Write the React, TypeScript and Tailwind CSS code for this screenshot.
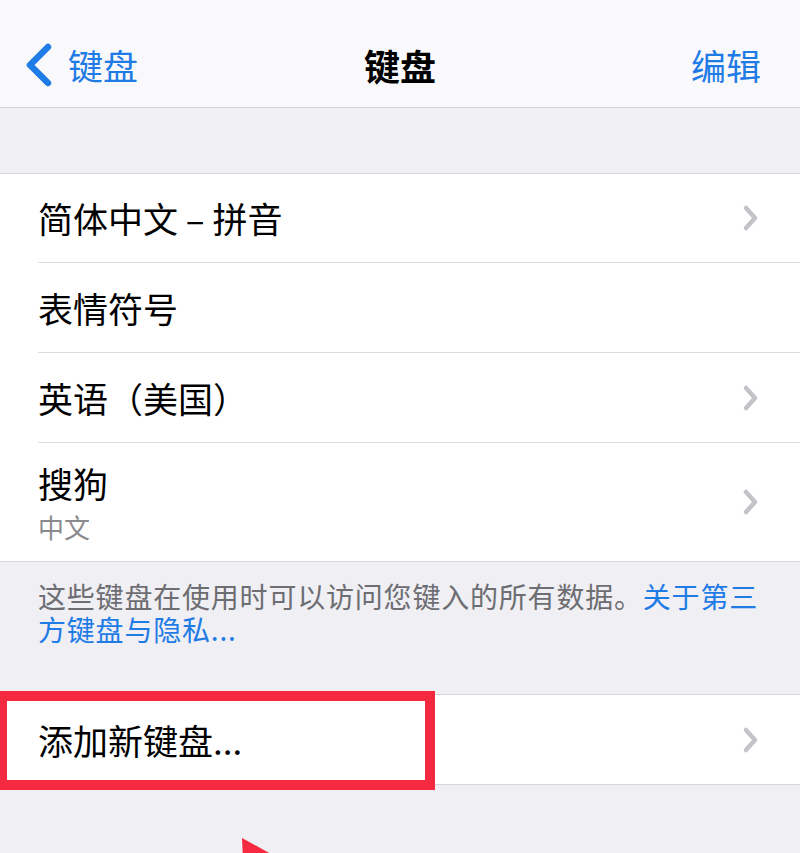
const font = { fontFamily: '"Noto Sans CJK SC", "Noto Sans", sans-serif' };

function Chevron() {
  return (
    <svg width="18" height="28" viewBox="0 0 18 28" className="shrink-0">
      <path d="M4 4 L13 14 L4 24" fill="none" stroke="#c4c4c8" strokeWidth="4.5" strokeLinecap="round" strokeLinejoin="round" />
    </svg>
  );
}

function Row({ title, sub, h, chevron = true, last = false }: { title: string; sub?: string; h: string; chevron?: boolean; last?: boolean }) {
  return (
    <div className="pl-[38px] bg-white">
      <div className={`${h} flex items-center justify-between pr-[40px] ${last ? '' : 'border-b border-[#dcdce0]'}`}>
        <div className="flex flex-col">
          <span className="text-[35px] leading-[40px] text-black">{title}</span>
          {sub && <span className="text-[26px] leading-[30px] text-[#8a8a8e] mt-[9px]">{sub}</span>}
        </div>
        {chevron && <Chevron />}
      </div>
    </div>
  );
}

export default function App() {
  return (
    <div style={font} className="relative w-[800px] h-[853px] bg-[#efeff4] overflow-hidden">
      {/* nav bar */}
      <div className="h-[108px] bg-[#f9f9fb] border-b border-[#d4d4d8] grid grid-cols-[1fr_auto_1fr] items-center px-[24px] pt-[22px]">
        <div className="flex items-center gap-[14px] text-[#1f7be6]">
          <svg width="30" height="44" viewBox="0 0 30 44">
            <path d="M24 4 L6 22 L24 40" fill="none" stroke="#1f7be6" strokeWidth="6.5" strokeLinecap="round" strokeLinejoin="round" />
          </svg>
          <span className="text-[35px] leading-none">键盘</span>
        </div>
        <span className="text-[36px] font-bold leading-none text-black">键盘</span>
        <span className="justify-self-end text-[35px] leading-none text-[#1f7be6] pr-[15px]">编辑</span>
      </div>

      <div className="h-[65px]" />

      {/* keyboards */}
      <div className="border-y border-[#d6d6da]">
        <Row title="简体中文 – 拼音" h="h-[89px]" />
        <Row title="表情符号" h="h-[90px]" chevron={false} />
        <Row title="英语（美国）" h="h-[90px]" />
        <Row title="搜狗" sub="中文" h="h-[118px]" last />
      </div>

      <p className="px-[38px] pt-[18px] pb-[48px] text-[28px] leading-[33px] tracking-[0.8px] text-[#6d6d72]">
        这些键盘在使用时可以访问您键入的所有数据。<span className="text-[#1f7be6]">关于第三方键盘与隐私...</span>
      </p>

      <div className="border-y border-[#d6d6da]">
        <Row title="添加新键盘..." h="h-[89px]" last />
      </div>

      {/* annotation */}
      <div className="absolute left-0 top-[691px] w-[435px] h-[99px] border-[10px] border-l-[7px] border-[#f5293f]" />
      <svg className="absolute left-0 top-0" width="800" height="853">
        <polygon points="242,838 300,870 244,880" fill="#f5293f" />
      </svg>
    </div>
  );
}
